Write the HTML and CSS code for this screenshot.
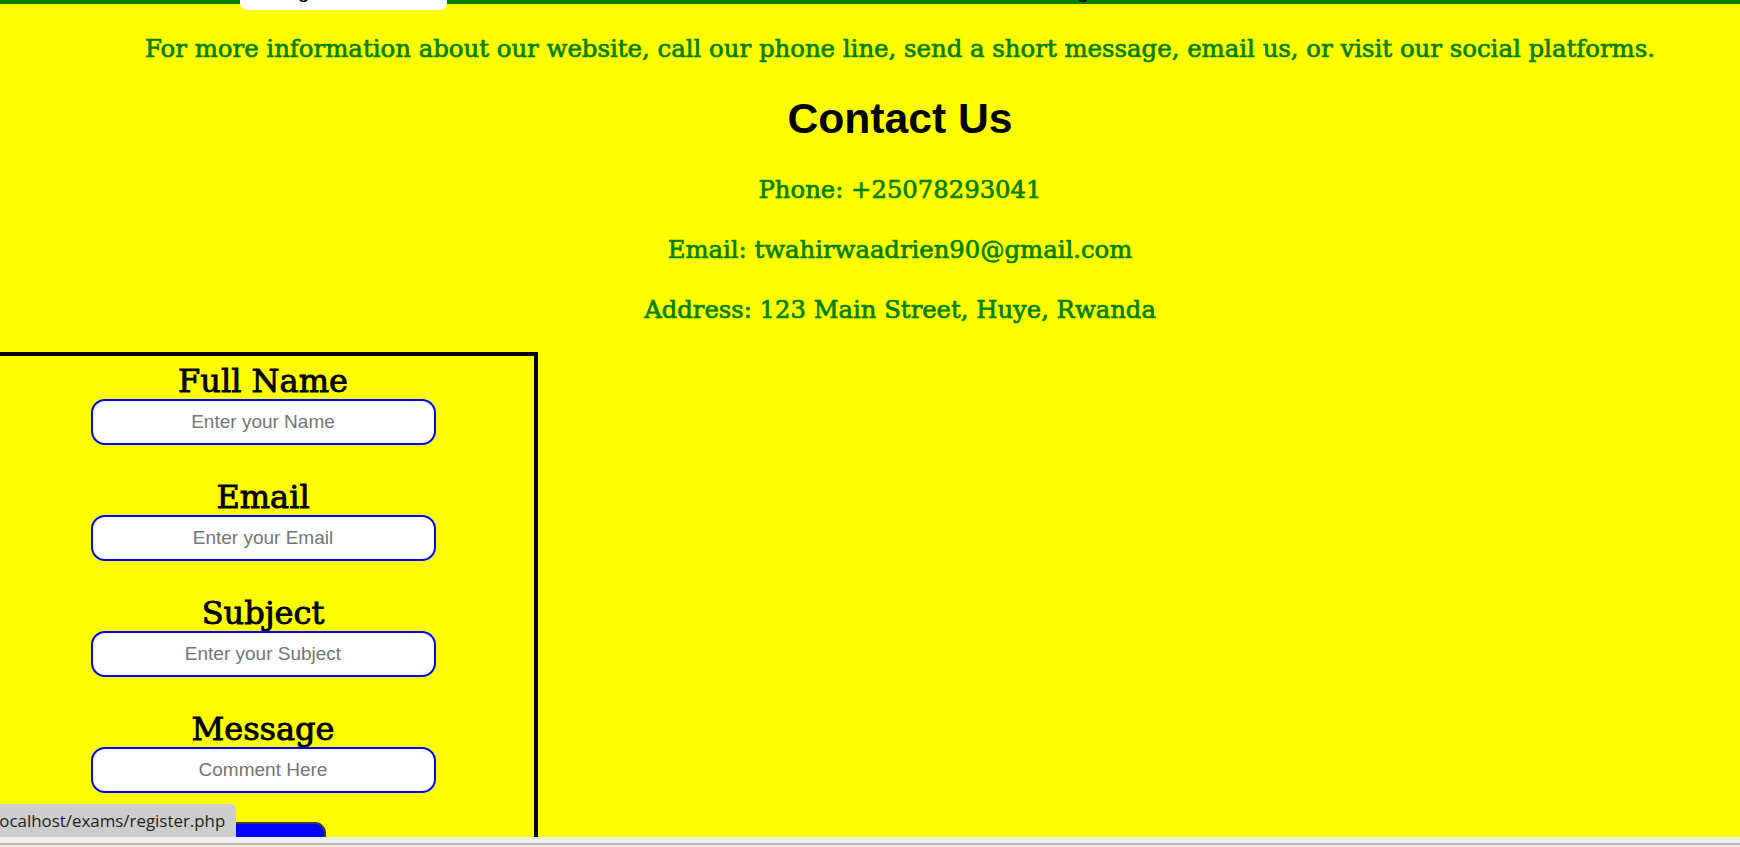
FILE: index.html
```html
<!DOCTYPE html>
<html lang="en">
<head>
<meta charset="utf-8">
<title>Contact Us</title>
<link rel="stylesheet" href="styles.css">
</head>
<body>
<nav class="nav">
  <a class="nav-tab" href="#">Register</a>
  <a class="nav-link" href="#">Login</a>
</nav>
<main class="main">
  <p class="intro">For more information about our website, call our phone line, send a short message, email us, or visit our social platforms.</p>
  <h1 class="title">Contact Us</h1>
  <p class="info">Phone: +25078293041</p>
  <p class="info">Email: twahirwaadrien90@gmail.com</p>
  <p class="info">Address: 123 Main Street, Huye, Rwanda</p>
</main>
<form class="form-box">
  <div class="field">
    <label class="field-label" for="name">Full Name</label>
    <input class="field-input" id="name" type="text" placeholder="Enter your Name">
  </div>
  <div class="field">
    <label class="field-label" for="email">Email</label>
    <input class="field-input" id="email" type="email" placeholder="Enter your Email">
  </div>
  <div class="field">
    <label class="field-label" for="subject">Subject</label>
    <input class="field-input" id="subject" type="text" placeholder="Enter your Subject">
  </div>
  <div class="field">
    <label class="field-label" for="message">Message</label>
    <input class="field-input" id="message" type="text" placeholder="Comment Here">
  </div>
  <button class="submit" type="submit">Submit</button>
</form>
<div class="status-tip">localhost/exams/register.php</div>
<div class="chrome-bottom"></div>
</body>
</html>
```
FILE: styles.css
```css
html, body {
  margin: 0;
  padding: 0;
}
body {
  background: #ffff00;
  overflow: hidden;
  height: 847px;
}
.nav {
  display: flex;
  align-items: flex-start;
  height: 54px;
  margin-top: -50px;
  padding-left: 240px;
  background: #008000;
  font-family: "Liberation Sans", Arial, sans-serif;
  font-size: 21px;
  line-height: 21px;
}
.nav-tab {
  box-sizing: border-box;
  width: 207px;
  height: 60px;
  padding: 30px 0 0 31px;
  background: #ffffff;
  border-radius: 0 0 7px 7px;
  color: #000;
  text-decoration: none;
}
.nav-link {
  margin-left: 607px;
  padding-top: 30px;
  color: #000;
  text-decoration: none;
}
.main {
  padding-left: 60px;
  text-align: center;
}
.intro {
  margin: 30px 0 0;
  color: #008000;
  font-family: "DejaVu Serif", serif;
  font-size: 24.4px;
  line-height: 30px;
  -webkit-text-stroke: 0.7px #008000;
}
.title {
  margin: 29px 0 0;
  font-family: "Liberation Sans", Arial, sans-serif;
  font-weight: bold;
  font-size: 42.67px;
  line-height: 50px;
  color: #000;
}
.info {
  margin: 30px 0 0;
  color: #008000;
  font-family: "DejaVu Serif", serif;
  font-size: 24.3px;
  line-height: 30px;
  -webkit-text-stroke: 0.7px #008000;
}
.title + .info {
  margin-top: 32px;
}
.form-box {
  box-sizing: border-box;
  width: 550px;
  margin: 27px 0 0 -12px;
  padding-top: 7px;
  border: 4px solid #000;
  display: flex;
  flex-direction: column;
  align-items: center;
  height: 600px;
}
.field {
  display: flex;
  flex-direction: column;
  align-items: center;
}
.field + .field {
  margin-top: 34px;
}
.field-label {
  font-family: "DejaVu Serif", serif;
  font-size: 32px;
  line-height: 36px;
  color: #000;
  -webkit-text-stroke: 0.9px #000;
}
.field-input {
  box-sizing: border-box;
  width: 345px;
  height: 46px;
  border: 2px solid #0000ff;
  border-radius: 14px;
  background: #fff;
  text-align: center;
  font-family: "Liberation Sans", Arial, sans-serif;
  font-size: 19px;
  padding: 0 10px;
  outline: none;
}
.field-input::placeholder {
  color: #757575;
}
.submit {
  box-sizing: border-box;
  margin-top: 29px;
  width: 126px;
  height: 46px;
  background: #0000ff;
  border: 2px solid #3c3c3c;
  border-radius: 11px;
  color: #fff;
  font-family: "Liberation Sans", Arial, sans-serif;
  font-size: 19px;
}
.status-tip {
  position: fixed;
  left: 0;
  top: 804px;
  width: 236px;
  height: 34px;
  box-sizing: border-box;
  background: #cdcdcd;
  border-top-right-radius: 5px;
  overflow: hidden;
  white-space: nowrap;
  font-family: "Open Sans", "Noto Sans", sans-serif;
  font-size: 16.9px;
  line-height: 34px;
  color: #222;
  text-indent: -5px;
}
.chrome-bottom {
  position: fixed;
  left: 0;
  right: 0;
  bottom: 0;
  height: 10px;
  background: linear-gradient(#f0f0f0 0, #f0f0f0 6px, #bdbdbd 6px, #bdbdbd 8px, #efe9e4 8px);
}
```
